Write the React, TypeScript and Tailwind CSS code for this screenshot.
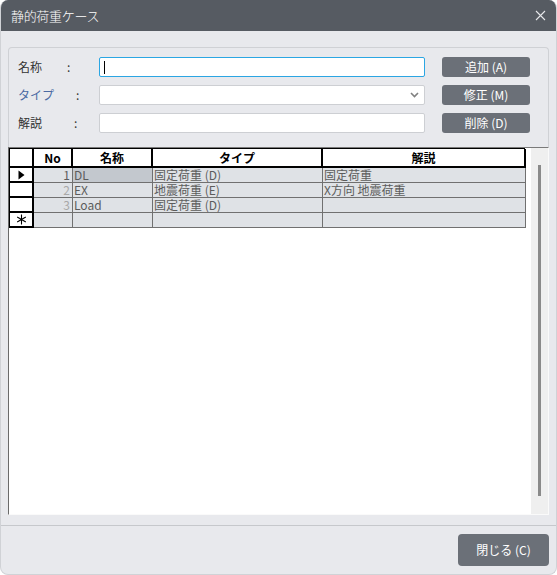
import React from "react";

const JP = { fontFamily: '"Noto Sans CJK JP", "Noto Sans", sans-serif' };

function HeaderCell({ children, className = "" }: { children?: React.ReactNode; className?: string }) {
  return (
    <div className={`h-[19px] bg-white border-r-2 border-b-2 border-black flex items-center justify-center text-[12px] font-bold text-black leading-[14px] ${className}`}>
      {children}
    </div>
  );
}

function RowHead({ children }: { children?: React.ReactNode }) {
  return (
    <div className="h-[15px] bg-white border-r-2 border-b-2 border-black flex items-center justify-center text-[12px] text-black leading-[12px]">
      {children}
    </div>
  );
}

function Cell({ children, className = "" }: { children?: React.ReactNode; className?: string }) {
  return (
    <div className={`h-[15px] border-r border-b border-[#707070] flex items-center px-[1px] text-[12px] leading-[12px] text-[#5c5c5c] whitespace-nowrap ${className}`}>
      {children}
    </div>
  );
}

export default function App() {
  const rows = [
    { no: "1", name: "DL", type: "固定荷重 (D)", desc: "固定荷重", head: true, noColor: "text-[#3a3a3a]", sel: true },
    { no: "2", name: "EX", type: "地震荷重 (E)", desc: "X方向 地震荷重", head: false, noColor: "text-[#a8a8a8]", sel: false },
    { no: "3", name: "Load", type: "固定荷重 (D)", desc: "", head: false, noColor: "text-[#a8a8a8]", sel: false },
  ];
  return (
    <div className="w-[557px] h-[575px] bg-white" style={JP}>
      <div className="w-[557px] h-[575px] rounded-lg overflow-hidden bg-[#e8e9ed] flex flex-col border border-[#d0d2d6] border-t-0">
        {/* Title bar */}
        <div className="h-[31px] bg-[#565b62] flex items-center justify-between pl-[11px] pr-[10px] -mx-px">
          <span className="text-[13px] text-white tracking-tight font-light">静的荷重ケース</span>
          <svg width="11" height="11" viewBox="0 0 11 11" className="mr-[1px]">
            <path d="M1 1 L10 10 M10 1 L1 10" stroke="#e6e7ea" strokeWidth="1.1" />
          </svg>
        </div>

        {/* Panel */}
        <div className="mt-[16px] ml-[7px] mr-[7px] flex flex-col">
          <div className="border-t border-x border-[#cfd1d5] rounded-t-[4px] pt-[9px] pb-[14px] pl-[9px] pr-[17px] flex flex-col gap-[8px]">
            {/* Row 1 */}
            <div className="flex items-center h-[20px]">
              <div className="w-[81px] flex items-center text-[12px] text-[#333]">
                <span>名称</span>
                <span className="ml-[25px]">:</span>
              </div>
              <div className="w-[326px] h-[20px] bg-white border border-[#2ba6e3] rounded-[2px] flex items-center pl-[4px]">
                <div className="w-px h-[13px] bg-black" />
              </div>
              <button className="ml-[17px] w-[88px] h-[20px] bg-[#6b7078] rounded-[3px] text-white text-[12px] leading-none">追加 (A)</button>
            </div>
            {/* Row 2 */}
            <div className="flex items-center h-[20px]">
              <div className="w-[81px] flex items-center text-[12px]">
                <span className="text-[#4a6aa3]">タイプ</span>
                <span className="ml-[22px] text-[#333]">:</span>
              </div>
              <div className="w-[326px] h-[20px] bg-white border border-[#cdcfd3] rounded-[2px] flex items-center justify-end pr-[5px]">
                <svg width="9" height="6" viewBox="0 0 9 6">
                  <path d="M1 1 L4.5 4.5 L8 1" stroke="#808080" strokeWidth="1.6" fill="none" />
                </svg>
              </div>
              <button className="ml-[17px] w-[88px] h-[20px] bg-[#6b7078] rounded-[3px] text-white text-[12px] leading-none">修正 (M)</button>
            </div>
            {/* Row 3 */}
            <div className="flex items-center h-[20px]">
              <div className="w-[81px] flex items-center text-[12px] text-[#333]">
                <span>解説</span>
                <span className="ml-[32px]">:</span>
              </div>
              <div className="w-[326px] h-[20px] bg-white border border-[#cdcfd3] rounded-[2px]" />
              <button className="ml-[17px] w-[88px] h-[20px] bg-[#6b7078] rounded-[3px] text-white text-[12px] leading-none">削除 (D)</button>
            </div>
          </div>

          {/* Grid */}
          <div className="h-[368px] border-t border-l border-t-[#7a7a7a] border-l-[#6a6a6a] border-r border-b border-r-[#fafafa] border-b-[#fafafa] bg-white flex">
            <div className="flex-1">
              <div className="w-[516px] border-t border-l border-black grid grid-cols-[24px_39px_80px_170px_203px]">
                <HeaderCell />
                <HeaderCell>No</HeaderCell>
                <HeaderCell>名称</HeaderCell>
                <HeaderCell>タイプ</HeaderCell>
                <HeaderCell>解説</HeaderCell>
                {rows.map((r) => (
                  <React.Fragment key={r.no}>
                    <RowHead>
                      {r.head ? (
                        <svg width="7" height="10" viewBox="0 0 7 10">
                          <path d="M0.5 0.5 L6.5 5 L0.5 9.5 Z" fill="#000" />
                        </svg>
                      ) : null}
                    </RowHead>
                    <Cell className={`bg-[#dfe2e6] justify-end pr-[2px] ${r.noColor}`}>{r.no}</Cell>
                    <Cell className={r.sel ? "bg-[#c3c8ce]" : "bg-[#dfe2e6]"}>{r.name}</Cell>
                    <Cell className="bg-[#dfe2e6]">{r.type}</Cell>
                    <Cell className="bg-[#dfe2e6]">{r.desc}</Cell>
                  </React.Fragment>
                ))}
                <RowHead>
                  <svg width="11" height="11" viewBox="0 0 11 11">
                    <path d="M5.5 0.5 V10.5 M1.2 3 L9.8 8 M9.8 3 L1.2 8" stroke="#000" strokeWidth="1.1" fill="none" />
                  </svg>
                </RowHead>
                <Cell className="bg-[#dfe2e6]" />
                <Cell className="bg-[#dfe2e6]" />
                <Cell className="bg-[#dfe2e6]" />
                <Cell className="bg-[#dfe2e6]" />
              </div>
            </div>
            {/* Scrollbar */}
            <div className="w-[17px] bg-[#efefef] flex justify-center pt-[17px] pb-[18px]">
              <div className="w-[3px] bg-[#8a8a8a]" />
            </div>
          </div>
        </div>

        {/* Footer */}
        <div className="mt-[10px] border-t border-[#c6c8cc] flex justify-end pt-[8px] pr-[7px]">
          <button className="w-[91px] h-[32px] bg-[#6b7078] rounded-[4px] text-white text-[12px] leading-none">閉じる (C)</button>
        </div>
      </div>
    </div>
  );
}
